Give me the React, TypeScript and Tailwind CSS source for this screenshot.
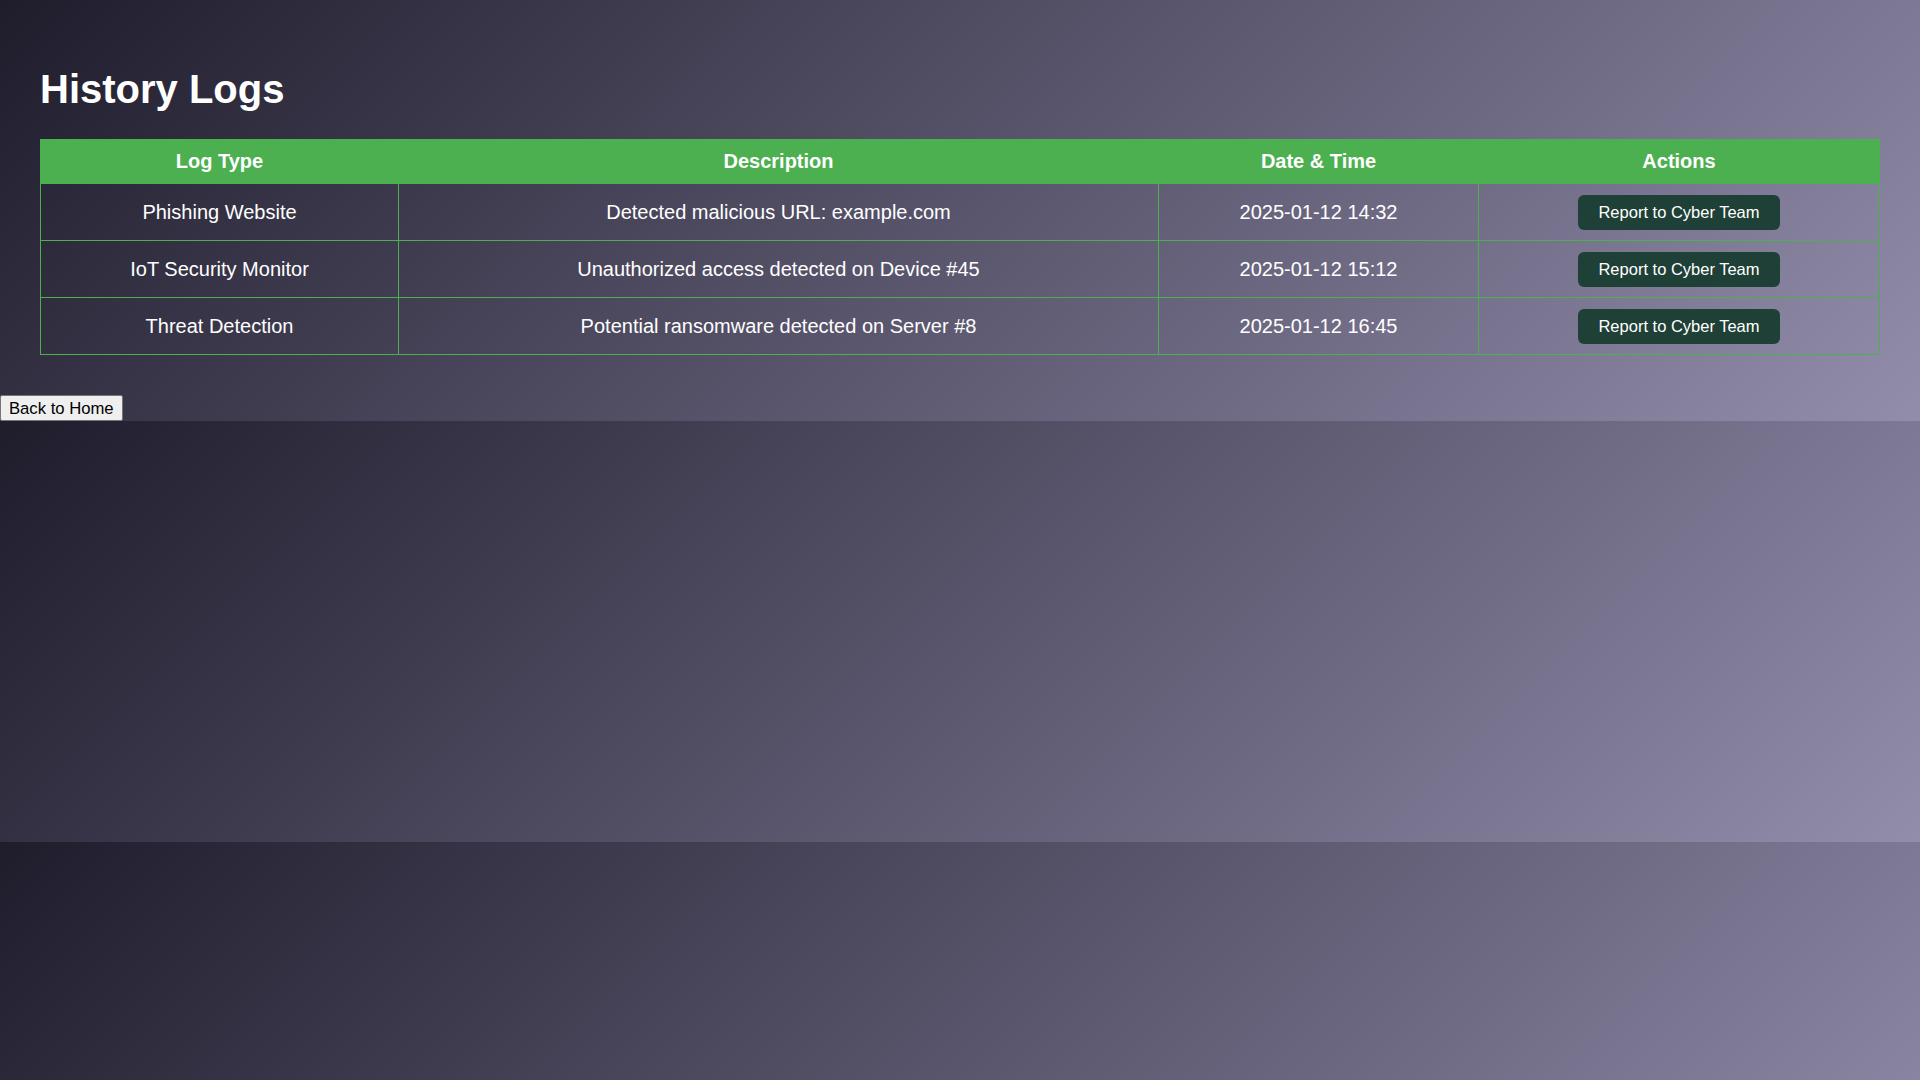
const logs = [
  {
    type: 'Phishing Website',
    description: 'Detected malicious URL: example.com',
    time: '2025-01-12 14:32',
  },
  {
    type: 'IoT Security Monitor',
    description: 'Unauthorized access detected on Device #45',
    time: '2025-01-12 15:12',
  },
  {
    type: 'Threat Detection',
    description: 'Potential ransomware detected on Server #8',
    time: '2025-01-12 16:45',
  },
]

export default function App() {
  return (
    <div className="min-h-screen bg-[linear-gradient(135deg,#1f1c2c,#928dab)] bg-[length:100%_421px] bg-size-[100%_421px] bg-repeat font-['Liberation_Sans',Arial,sans-serif] text-white">
      <div className="p-[40px]">
        <h1 className="mt-[26px] mb-[27px] text-[40px] leading-[46px] font-bold">
          History Logs
        </h1>
        <table className="w-full table-fixed border-collapse text-[20px] leading-[23px]">
          <colgroup>
            <col className="w-[358px]" />
            <col className="w-[760px]" />
            <col className="w-[320px]" />
            <col />
          </colgroup>
          <thead>
            <tr className="bg-[#4caf50]">
              <th className="border border-[#4caf50] px-[10px] py-[10px] text-center font-bold">
                Log Type
              </th>
              <th className="border border-[#4caf50] px-[10px] py-[10px] text-center font-bold">
                Description
              </th>
              <th className="border border-[#4caf50] px-[10px] py-[10px] text-center font-bold">
                Date &amp; Time
              </th>
              <th className="border border-[#4caf50] px-[10px] py-[10px] text-center font-bold">
                Actions
              </th>
            </tr>
          </thead>
          <tbody>
            {logs.map((log) => (
              <tr key={log.time}>
                <td className="border border-[#4caf50] px-[10px] py-[10.5px] text-center align-middle">
                  {log.type}
                </td>
                <td className="border border-[#4caf50] px-[10px] py-[10.5px] text-center align-middle">
                  {log.description}
                </td>
                <td className="border border-[#4caf50] px-[10px] py-[10.5px] text-center align-middle">
                  {log.time}
                </td>
                <td className="border border-[#4caf50] px-[10px] py-[10.5px] text-center align-middle">
                  <button
                    type="button"
                    className="h-[35px] rounded-[6px] bg-[#1f4037] px-[20px] text-[16.5px] leading-[19px] text-white"
                  >
                    Report to Cyber Team
                  </button>
                </td>
              </tr>
            ))}
          </tbody>
        </table>
      </div>
      <button
        type="button"
        className="h-[26px] rounded-[2px] border border-[#767676] bg-[#efefef] px-[8px] text-[16.67px] leading-[19px] text-black"
      >
        Back to Home
      </button>
    </div>
  )
}
